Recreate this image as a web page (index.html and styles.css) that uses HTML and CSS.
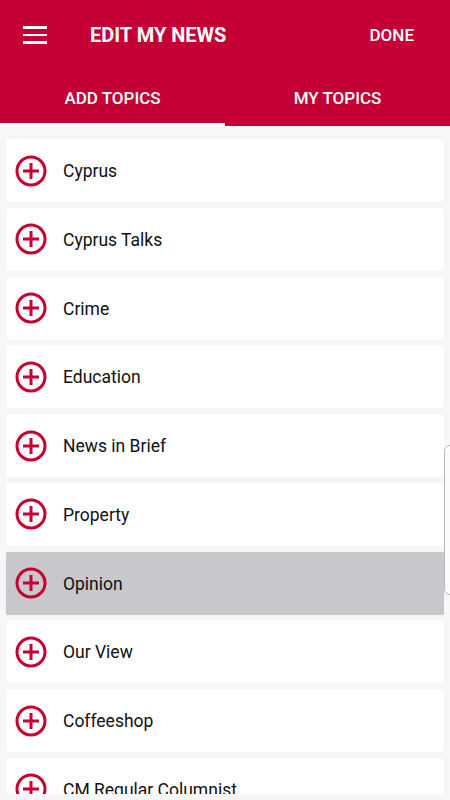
FILE: index.html
```html
<!DOCTYPE html>
<html lang="en">
<head>
  <meta charset="UTF-8">
  <meta name="viewport" content="width=device-width, initial-scale=1.0">
  <title>Edit My News</title>
  <link rel="stylesheet" href="styles.css">
</head>
<body>
  <header class="app-header">
    <div class="toolbar">
      <button class="menu-button" aria-label="Menu">
        <span></span><span></span><span></span>
      </button>
      <h1>EDIT MY NEWS</h1>
      <button class="done-button">DONE</button>
    </div>
    <nav class="tabs">
      <div class="tab active">ADD TOPICS</div>
      <div class="tab">MY TOPICS</div>
    </nav>
  </header>

  <main class="topic-list">
    <div class="topic"><svg class="add-icon" viewBox="0 0 32 32"><circle cx="16" cy="16" r="14" /><path d="M16 8v16M8 16h16" /></svg><span>Cyprus</span></div>
    <div class="topic"><svg class="add-icon" viewBox="0 0 32 32"><circle cx="16" cy="16" r="14" /><path d="M16 8v16M8 16h16" /></svg><span>Cyprus Talks</span></div>
    <div class="topic"><svg class="add-icon" viewBox="0 0 32 32"><circle cx="16" cy="16" r="14" /><path d="M16 8v16M8 16h16" /></svg><span>Crime</span></div>
    <div class="topic"><svg class="add-icon" viewBox="0 0 32 32"><circle cx="16" cy="16" r="14" /><path d="M16 8v16M8 16h16" /></svg><span>Education</span></div>
    <div class="topic"><svg class="add-icon" viewBox="0 0 32 32"><circle cx="16" cy="16" r="14" /><path d="M16 8v16M8 16h16" /></svg><span>News in Brief</span></div>
    <div class="topic"><svg class="add-icon" viewBox="0 0 32 32"><circle cx="16" cy="16" r="14" /><path d="M16 8v16M8 16h16" /></svg><span>Property</span></div>
    <div class="topic pressed"><svg class="add-icon" viewBox="0 0 32 32"><circle cx="16" cy="16" r="14" /><path d="M16 8v16M8 16h16" /></svg><span>Opinion</span></div>
    <div class="topic"><svg class="add-icon" viewBox="0 0 32 32"><circle cx="16" cy="16" r="14" /><path d="M16 8v16M8 16h16" /></svg><span>Our View</span></div>
    <div class="topic"><svg class="add-icon" viewBox="0 0 32 32"><circle cx="16" cy="16" r="14" /><path d="M16 8v16M8 16h16" /></svg><span>Coffeeshop</span></div>
    <div class="topic"><svg class="add-icon" viewBox="0 0 32 32"><circle cx="16" cy="16" r="14" /><path d="M16 8v16M8 16h16" /></svg><span>CM Regular Columnist</span></div>
  </main>

  <!-- edge panel handle -->
  <div class="edge-handle"></div>
</body>
</html>
```

FILE: styles.css
```css
body {
  font-family: Roboto, "Liberation Sans", Arial, sans-serif;
  margin: 0;
  padding: 0;
  background-color: #f7f7f7;
  color: #111;
  height: 800px;
  overflow: hidden;
}

.app-header {
  background: #c50034;
  color: white;
}

.toolbar {
  display: flex;
  align-items: center;
  height: 70px;
  padding: 0 36px 0 23px;
}

.menu-button {
  display: flex;
  flex-direction: column;
  gap: 5px;
  width: 24px;
  padding: 0;
  background: none;
  border: none;
  cursor: pointer;
}

.menu-button span {
  display: block;
  height: 2.5px;
  background: white;
}

.toolbar h1 {
  margin: 0 0 0 43px;
  font-size: 20px;
  font-weight: bold;
  flex: 1;
}

.done-button {
  background: none;
  border: none;
  color: white;
  font-family: inherit;
  font-size: 17px;
  font-weight: 500;
  padding: 0;
}

.tabs {
  display: flex;
  height: 56px;
}

.tab {
  flex: 1;
  display: flex;
  align-items: center;
  justify-content: center;
  font-size: 17px;
  font-weight: 500;
  border-bottom: 3px solid transparent;
  padding-top: 3px;
}

.tab.active {
  border-bottom-color: white;
}

.topic-list {
  padding: 13px 6px 0;
  display: flex;
  flex-direction: column;
  gap: 5.75px;
  height: 655px;
  overflow: hidden;
}

.topic {
  flex-shrink: 0;
  display: flex;
  align-items: center;
  height: 63px;
  padding-left: 9px;
  background: #fff;
  border-radius: 2px;
  box-shadow: 0 0 1px rgba(0, 0, 0, 0.12);
  font-size: 17.5px;
}

.topic span {
  padding-top: 1px;
}

.topic.pressed {
  background: #c8c8cc;
}

.add-icon {
  width: 32px;
  height: 32px;
  margin-right: 16px;
  fill: none;
  stroke: #c8002f;
  stroke-width: 3;
}

.edge-handle {
  position: absolute;
  top: 445px;
  left: 444px;
  width: 20px;
  height: 148px;
  border: 1px solid #b8b8b8;
  border-radius: 6px;
  background: rgba(255, 255, 255, 0.6);
}
```
